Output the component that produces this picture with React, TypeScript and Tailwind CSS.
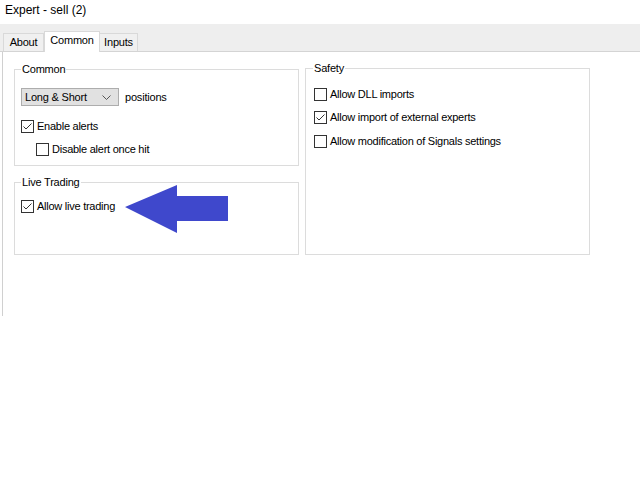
import React from 'react'

const font = { fontFamily: '"Liberation Sans", Arial, sans-serif' }

function CheckBox({ checked, label, className = '' }: { checked?: boolean; label: string; className?: string }) {
  return (
    <label className={`flex items-center h-[13px] ${className}`}>
      <span className="w-[13px] h-[13px] border border-[#333333] bg-white flex items-center justify-center shrink-0">
        {checked && (
          <svg width="11" height="11" viewBox="0 0 11 11">
            <path d="M1.5 5.5 L4 8 L9.5 2.5" fill="none" stroke="#333333" strokeWidth="1" />
          </svg>
        )}
      </span>
      <span className="ml-[3px] text-[11px] leading-[13px] tracking-[-0.25px] text-black whitespace-nowrap">{label}</span>
    </label>
  )
}

function Group({ title, className = '', children }: { title: string; className?: string; children: React.ReactNode }) {
  return (
    <fieldset className={`border border-[#dcdcdc] ${className}`}>
      <legend className="px-[1px] text-[11px] leading-[14px] tracking-[-0.2px] text-black">{title}</legend>
      {children}
    </fieldset>
  )
}

export default function App() {
  return (
    <div className="w-[640px] h-[480px] bg-white relative overflow-hidden" style={font}>
      {/* title */}
      <div className="h-[24px] pl-[5px] pt-[3px] text-[12px] leading-[14px] text-black">Expert - sell (2)</div>

      {/* tabs */}
      <div className="h-[28px] bg-[#eeeeee] border-b border-[#d4d4d4] flex items-end pl-[3px]">
        <div className="w-[41px] h-[18px] border border-b-0 border-[#d9d9d9] bg-[#f0f0f0] text-[11px] leading-[17px] tracking-[-0.2px] text-center text-black">About</div>
        <div className="w-[56px] h-[21px] -mb-px border border-b-0 border-[#d9d9d9] bg-white text-[11px] leading-[17px] tracking-[-0.2px] text-center text-black">Common</div>
        <div className="w-[38px] h-[18px] border border-b-0 border-l-0 border-[#d9d9d9] bg-[#f0f0f0] text-[11px] leading-[17px] tracking-[-0.2px] text-center text-black">Inputs</div>
      </div>

      {/* content */}
      <div className="ml-[2px] h-[264px] border-l border-[#d0d0d0] flex items-start pl-[11px] gap-[6px]">
        <div className="flex flex-col w-[285px]">
          <Group title="Common" className="mt-[10px] h-[104px] px-[6px]">
            <div className="flex items-center mt-[12px]">
              <div className="w-[98px] h-[18px] border border-[#adadad] bg-[#e1e1e1] flex items-center justify-between pl-[3px] pr-[7px]">
                <span className="text-[11px] leading-[14px] tracking-[-0.2px] text-black">Long &amp; Short</span>
                <svg width="9" height="5" viewBox="0 0 9 5">
                  <path d="M0.5 0.5 L4.5 4.5 L8.5 0.5" fill="none" stroke="#555555" strokeWidth="1" />
                </svg>
              </div>
              <span className="ml-[6px] text-[11px] leading-[14px] tracking-[-0.2px] text-black">positions</span>
            </div>
            <CheckBox checked label="Enable alerts" className="mt-[14px]" />
            <CheckBox label="Disable alert once hit" className="mt-[10px] ml-[15px]" />
          </Group>

          <Group title="Live Trading" className="mt-[9px] h-[80px] px-[6px]">
            <CheckBox checked label="Allow live trading" className="mt-[11px]" />
          </Group>
        </div>

        <Group title="Safety" className="mt-[9px] w-[285px] h-[194px] px-[7px]">
          <CheckBox label="Allow DLL imports" className="mt-[13px] ml-px" />
          <CheckBox checked label="Allow import of external experts" className="mt-[10px] ml-px" />
          <CheckBox label="Allow modification of Signals settings" className="mt-[11px] ml-px" />
        </Group>
      </div>

      {/* annotation arrow */}
      <svg className="absolute left-0 top-0" width="640" height="480" viewBox="0 0 640 480">
        <polygon points="125,207 177,185 177,196 228,196 228,221 177,221 177,233" fill="#3f48cc" />
      </svg>
    </div>
  )
}
